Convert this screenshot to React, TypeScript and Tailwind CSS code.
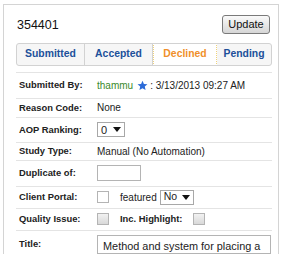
import React from "react";

const font = "font-['Liberation_Sans',Arial,sans-serif]";

function Caret() {
    return (
        <svg width="8" height="5" viewBox="0 0 8 5" className="ml-auto">
            <path d="M0 0 L8 0 L4 5 Z" fill="#111" />
        </svg>
    );
}

function Check({ light }: { light?: boolean }) {
    return (
        <span
            className={
                "block w-[12px] h-[12px] border border-[#b4b4b4] " +
                (light ? "bg-white" : "bg-gradient-to-b from-[#f2f2f2] to-[#d9d9d9]")
            }
        />
    );
}

function Row({ label, h, children }: { label: string; h: string; children?: React.ReactNode }) {
    return (
        <div className={"flex items-center border-t border-[#e4e4e4] " + h}>
            <div className="w-[81px] pl-[3px] text-[9.4px] font-bold text-[#222]">{label}</div>
            <div className="flex items-center text-[10px] text-[#222]">{children}</div>
        </div>
    );
}

export default function App() {
    const tabs = [
        { name: "Submitted", w: "w-[68px]" },
        { name: "Accepted", w: "w-[68px]" },
        { name: "Declined", w: "w-[64px]", active: true },
        { name: "Pending", w: "flex-1" },
    ];

    return (
        <div className={"w-[283px] h-[254px] overflow-hidden bg-white pt-[4px] pl-[3px] " + font}>
            <div className="w-[276px] h-[260px] border border-b-0 border-[#d4d4d4] pl-[12px] pr-[6px]">
                {/* header */}
                <div className="flex items-center pt-[9px] mb-[8px]">
                    <span className="pl-[1px] pt-[2px] text-[12.5px] text-[#111]">354401</span>
                    <button className="ml-auto mr-[2px] w-[48px] h-[19px] rounded-[3px] border border-[#7a7a7a] bg-gradient-to-b from-[#fafafa] to-[#d6d6d6] text-[11px] text-[#111]">
                        Update
                    </button>
                </div>

                {/* tabs */}
                <div className="flex h-[23px] rounded-[3px] border border-[#d2d2d2] bg-[#f6f6f6] overflow-hidden">
                    {tabs.map((t, i) => (
                        <div
                            key={t.name}
                            className={
                                "flex items-center justify-center text-[10.4px] font-bold " +
                                t.w +
                                (t.active
                                    ? " bg-white text-[#f0902a] border border-dotted border-[#f0d27a] -my-px"
                                    : " text-[#20509a]") +
                                (i < 2 ? " border-r border-[#d2d2d2]" : "")
                            }
                        >
                            {t.name}
                        </div>
                    ))}
                </div>

                {/* rows */}
                <div className="mt-[6px]">
                    <Row label="Submitted By:" h="h-[26px]">
                        <span className="text-[#3a8a2c]">thammu</span>
                        <svg width="11" height="11" viewBox="0 0 24 24" className="ml-[4px] mr-[2px]">
                            <path
                                d="M12 1.5l3.1 7.1 7.7.7-5.8 5.1 1.7 7.6L12 18l-6.7 4 1.7-7.6L1.2 9.3l7.7-.7z"
                                fill="#2c6bd8"
                            />
                        </svg>
                        <span>: 3/13/2013 09:27 AM</span>
                    </Row>
                    <Row label="Reason Code:" h="h-[19px]">
                        <span>None</span>
                    </Row>
                    <Row label="AOP Ranking:" h="h-[25px]">
                        <span className="flex items-center w-[28px] h-[15px] border border-[#a8a8a8] px-[3px] text-[11px]">
                            0
                            <Caret />
                        </span>
                    </Row>
                    <Row label="Study Type:" h="h-[18px]">
                        <span>Manual (No Automation)</span>
                    </Row>
                    <Row label="Duplicate of:" h="h-[26px]">
                        <span className="block w-[44px] h-[16px] border border-[#b4b4b4] bg-white" />
                    </Row>
                    <Row label="Client Portal:" h="h-[22px]">
                        <Check light />
                        <span className="ml-[11px] text-[10px]">featured</span>
                        <span className="ml-[3px] flex items-center w-[34px] h-[15px] border border-[#a8a8a8] px-[3px] text-[10.5px]">
                            No
                            <Caret />
                        </span>
                    </Row>
                    <Row label="Quality Issue:" h="h-[22px]">
                        <Check />
                        <span className="ml-[11px] text-[9.4px] font-bold">Inc. Highlight:</span>
                        <span className="ml-[10px]">
                            <Check />
                        </span>
                    </Row>
                    <Row label="Title:" h="h-[28px]">
                        <span className="block w-[174px] h-[19px] border border-[#b4b4b4] bg-white overflow-hidden whitespace-nowrap pl-[5px] pt-[2px] text-[10.9px]">
                            Method and system for placing a
                        </span>
                    </Row>
                </div>
            </div>
        </div>
    );
}
